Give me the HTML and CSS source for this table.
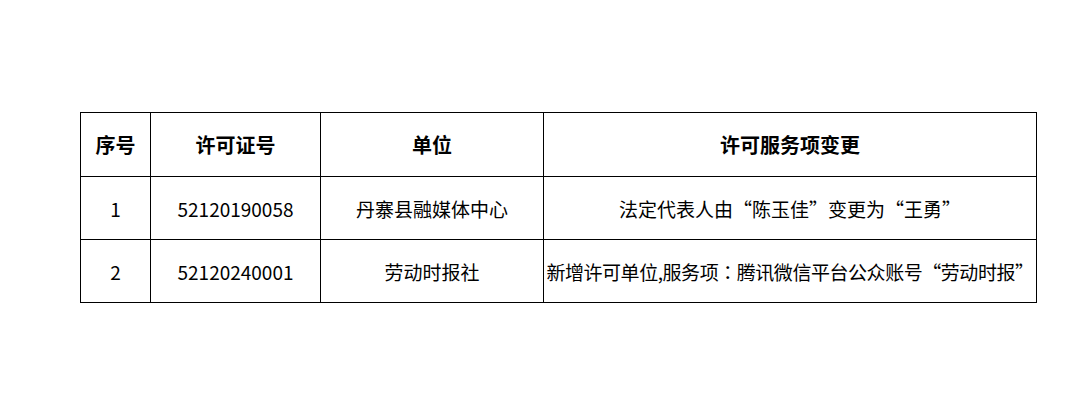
FILE: index.html
```html
<!DOCTYPE html>
<html lang="zh">
<head>
<meta charset="utf-8">
<link rel="stylesheet" href="styles.css">
</head>
<body>
<div class="page">
<table class="grid">
<colgroup>
<col class="c1"><col class="c2"><col class="c3"><col class="c4">
</colgroup>
<thead>
<tr class="head"><th>序号</th><th>许可证号</th><th>单位</th><th>许可服务项变更</th></tr>
</thead>
<tbody>
<tr><td>1</td><td>52120190058</td><td>丹寨县融媒体中心</td><td>法定代表人由“陈玉佳”变更为“王勇”</td></tr>
<tr><td>2</td><td>52120240001</td><td>劳动时报社</td><td class="tight">新增许可单位,服务项<span class="colon" lang="zh-TW">：</span>腾讯微信平台公众账号“劳动时报”</td></tr>
</tbody>
</table>
</div>
</body>
</html>
```
FILE: styles.css
```css
html, body {
  margin: 0;
  background: #fff;
}
.page {
  padding: 112px 0 0 80px;
  font-family: "Noto Sans CJK SC", "Noto Sans", sans-serif;
  color: #000;
}
.grid {
  border-collapse: collapse;
  table-layout: fixed;
  width: 957px;
}
.c1 { width: 70px; }
.c2 { width: 170px; }
.c3 { width: 223px; }
.c4 { width: 493px; }
.grid th, .grid td {
  border: 1px solid #000;
  text-align: center;
  vertical-align: middle;
  padding: 0;
  white-space: nowrap;
}
.grid th {
  height: 63px;
  font-size: 20px;
  font-weight: bold;
}
.grid td {
  height: 62px;
  font-size: 19px;
  font-weight: normal;
}
.grid td.tight {
  letter-spacing: -0.45px;
}
.colon {
  font-family: "Noto Sans CJK TC", sans-serif;
}
```
